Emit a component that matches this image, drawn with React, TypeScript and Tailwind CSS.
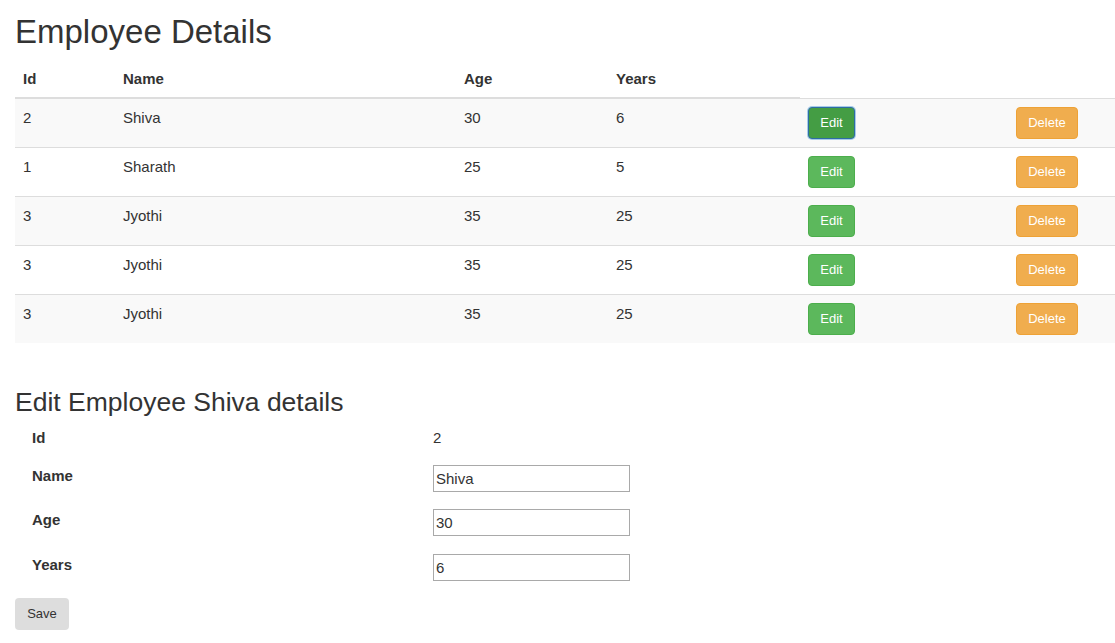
import React from "react";

const employees = [
  { id: 2, name: "Shiva", age: 30, years: 6 },
  { id: 1, name: "Sharath", age: 25, years: 5 },
  { id: 3, name: "Jyothi", age: 35, years: 25 },
  { id: 3, name: "Jyothi", age: 35, years: 25 },
  { id: 3, name: "Jyothi", age: 35, years: 25 },
];

export default function App() {
  return (
    <div className="pl-[15px] font-['Liberation_Sans',Arial,sans-serif] text-[#333] bg-white min-h-[643px]">
      <h1 className="text-[33px] leading-[36px] mt-[14px] mb-[11px]">
        Employee Details
      </h1>

      {/* employee table */}
      <table className="w-[1100px] table-fixed border-collapse text-[15px]">
        <colgroup>
          <col className="w-[100px]" />
          <col className="w-[341px]" />
          <col className="w-[152px]" />
          <col className="w-[192px]" />
          <col className="w-[208px]" />
          <col className="w-[107px]" />
        </colgroup>
        <thead>
          <tr>
            {["Id", "Name", "Age", "Years"].map((h) => (
              <th
                key={h}
                className="text-left font-bold px-2 py-2 leading-[20px] border-b-2 border-[#ddd]"
              >
                {h}
              </th>
            ))}
          </tr>
        </thead>
        <tbody>
          {employees.map((emp, index) => (
            <tr
              key={index}
              className={index % 2 === 0 ? "bg-[#f9f9f9]" : "bg-white"}
            >
              <td className="align-top px-2 py-2 leading-[21px] border-t border-[#ddd]">
                {emp.id}
              </td>
              <td className="align-top px-2 py-2 leading-[21px] border-t border-[#ddd]">
                {emp.name}
              </td>
              <td className="align-top px-2 py-2 leading-[21px] border-t border-[#ddd]">
                {emp.age}
              </td>
              <td className="align-top px-2 py-2 leading-[21px] border-t border-[#ddd]">
                {emp.years}
              </td>
              <td className="align-top px-2 py-2 border-t border-[#ddd]">
                <button
                  className={
                    index === 0
                      ? "w-[47px] h-[32px] rounded-[4px] text-[13px] text-white bg-[#449d44] border border-[#2e6da4] shadow-[0_0_0_1px_#a6cbe8]"
                      : "w-[47px] h-[32px] rounded-[4px] text-[13px] text-white bg-[#5cb85c] border border-[#4cae4c]"
                  }
                >
                  Edit
                </button>
              </td>
              <td className="align-top px-2 py-2 border-t border-[#ddd]">
                <button className="w-[62px] h-[32px] rounded-[4px] text-[13px] text-white bg-[#f0ad4e] border border-[#eea236]">
                  Delete
                </button>
              </td>
            </tr>
          ))}
        </tbody>
      </table>

      {/* edit form */}
      <h2 className="text-[26.5px] leading-[30px] mt-[44px]">
        Edit Employee Shiva details
      </h2>
      <div className="flex flex-col gap-[17px] mt-[10px] text-[15px]">
        <div className="flex items-start">
          <div className="w-[418px] pl-[17px] font-bold leading-[21px]">Id</div>
          <div className="leading-[21px]">2</div>
        </div>
        {[
          { label: "Name", value: "Shiva", extra: "" },
          { label: "Age", value: "30", extra: "" },
          { label: "Years", value: "6", extra: "mt-[1px]" },
        ].map((f) => (
          <div key={f.label} className={`flex items-start ${f.extra}`}>
            <div className="w-[418px] pl-[17px] font-bold leading-[21px]">
              {f.label}
            </div>
            <input
              type="text"
              defaultValue={f.value}
              className="w-[197px] h-[27px] border border-[#a9a9a9] px-[2px] text-[15px] text-[#333] outline-none"
            />
          </div>
        ))}
      </div>
      <button className="mt-[17px] w-[54px] h-[32px] rounded-[4px] bg-[#dddddd] text-[13px] text-[#333]">
        Save
      </button>
    </div>
  );
}
